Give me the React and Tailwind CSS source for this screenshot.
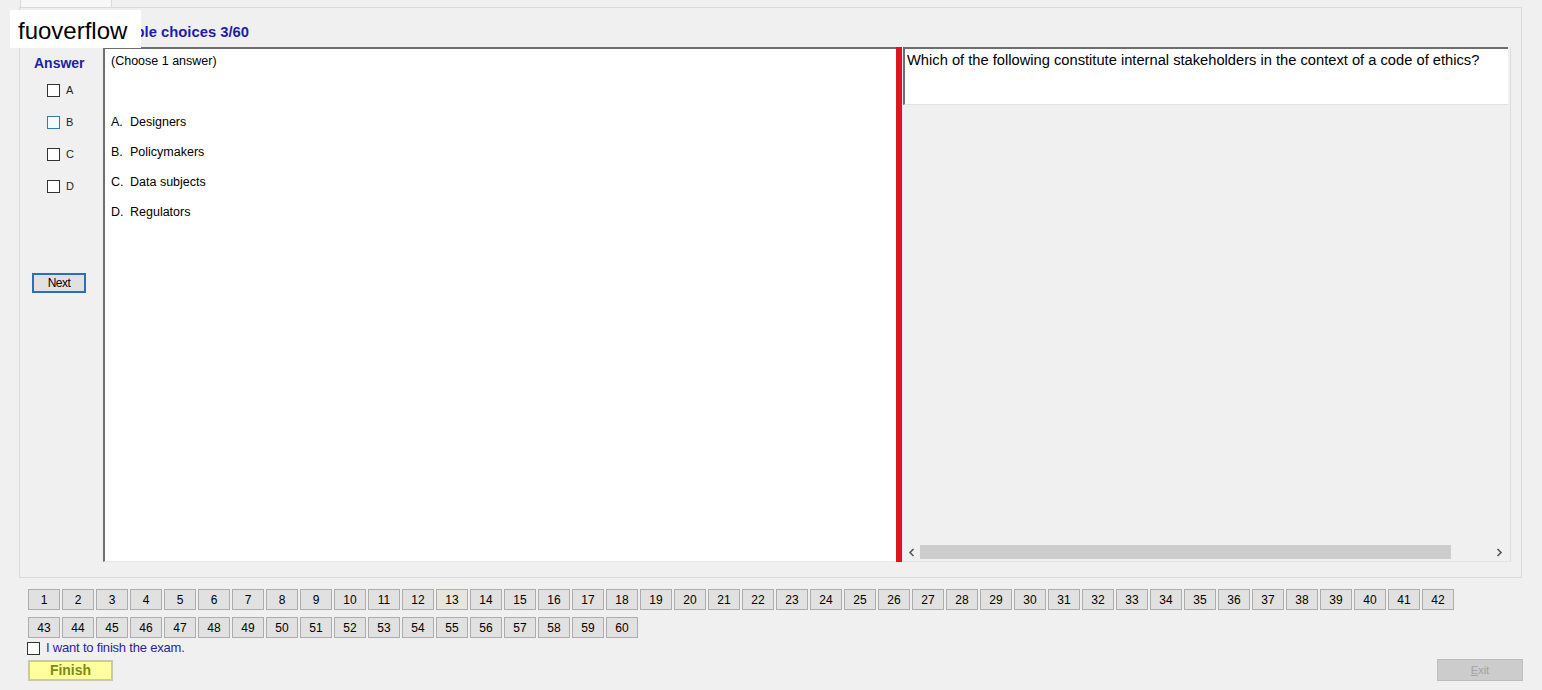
// App.jsx — exam question screen

const OPTIONS = [
  { key: 'A', text: 'Designers' },
  { key: 'B', text: 'Policymakers' },
  { key: 'C', text: 'Data subjects' },
  { key: 'D', text: 'Regulators' },
]

const ROW_ONE = Array.from({ length: 42 }, (_, i) => i + 1)
const ROW_TWO = Array.from({ length: 18 }, (_, i) => i + 43)

function Box({ hover = false }) {
  return (
    <div
      className={`w-[13px] h-[13px] border ${
        hover ? 'border-[#3a7aa8] bg-[#f3fafd]' : 'border-[#333333] bg-white'
      }`}
    />
  )
}

function NumButton({ n }) {
  return (
    <div
      className={`w-[32px] h-[21px] flex items-center justify-center text-[12px] text-black border border-[#adadad] ${
        n === 13 ? 'bg-[#e6e6dc]' : 'bg-[#e1e1e1]'
      }`}
    >
      {n}
    </div>
  )
}

export default function App() {
  return (
    <div
      className="relative w-[1542px] h-[690px] overflow-hidden bg-[#f0f0f0] text-black"
      style={{ fontFamily: '"Liberation Sans", Arial, sans-serif' }}
    >
      {/* tab strip */}
      <div className="h-[7px] flex">
        <div className="ml-[20px] w-[92px] h-[7px] bg-[#f7f7f7] border-l border-r border-[#d9d9d9]" />
        <div className="flex-1" />
      </div>

      {/* tab page */}
      <div className="ml-[19px] w-[1503px] border border-[#dadada] bg-[#f0f0f0]">
        <div className="pt-[16px] h-[32px]">
          <div className="pl-[81px] h-[16px] leading-[16px] text-[14.8px] font-bold text-[#1e1ea8]">
            Multiple choices 3/60
          </div>
        </div>

        <div className="mt-[7px] h-[515px] flex">
          {/* answer column */}
          <div className="w-[83px] flex flex-col">
            <div className="pt-[8px] pl-[14px] h-[27px] leading-[16px] text-[14px] font-bold text-[#2222a3]">
              Answer
            </div>
            <div className="flex flex-col">
              {OPTIONS.map((o, i) => (
                <div key={o.key} className="h-[32px] flex items-center pl-[27px] gap-[6px]">
                  <Box hover={i === 1} />
                  <span className="text-[11px] text-[#222]">{o.key}</span>
                </div>
              ))}
            </div>
            <div className="mt-[71px] ml-[12px] w-[54px] h-[20px] border-2 border-[#2a6fb8] bg-[#e1e1e1] flex items-center justify-center text-[12px] tracking-[-0.5px]">
              Next
            </div>
          </div>

          {/* options box */}
          <div className="w-[793px] bg-white border-l-2 border-t-2 border-[#6e6e6e] border-b border-b-[#e6e6e6] pl-[6px] pt-[4px] text-[12.5px]">
            <div className="h-[16px] leading-[16px]">(Choose 1 answer)</div>
            <div className="mt-[45px] flex flex-col gap-[14px]">
              {OPTIONS.map((o) => (
                <div key={o.key} className="h-[16px] leading-[16px] flex">
                  <span className="w-[19px]">{o.key}.</span>
                  <span>{o.text}</span>
                </div>
              ))}
            </div>
          </div>

          {/* splitter */}
          <div className="w-[6px] bg-[#dc1426]" />

          {/* question panel */}
          <div className="w-[609px] pl-[1px] border-r border-[#dcdcdc] flex flex-col border-b border-b-[#e4e4e4]">
            <div className="w-[605px] h-[58px] bg-white border-t-2 border-l-2 border-[#6e6e6e] border-b border-b-[#e2e2e2] pt-[3px] pl-[2px] text-[14.7px] leading-[17px]">
              Which of the following constitute internal stakeholders in the context of a code of ethics?
            </div>
            <div className="flex-1" />
            <div className="w-[605px] h-[14px] flex items-center">
              <div className="w-[17px] flex justify-center">
                <svg width="7" height="9" viewBox="0 0 7 9">
                  <path d="M5.5 1 L2 4.5 L5.5 8" stroke="#555" strokeWidth="1.6" fill="none" />
                </svg>
              </div>
              <div className="w-[531px] h-[14px] bg-[#cdcdcd]" />
              <div className="flex-1" />
              <div className="w-[17px] flex justify-center">
                <svg width="7" height="9" viewBox="0 0 7 9">
                  <path d="M1.5 1 L5 4.5 L1.5 8" stroke="#555" strokeWidth="1.6" fill="none" />
                </svg>
              </div>
            </div>
            <div className="h-[2px]" />
          </div>
        </div>

        <div className="h-[15px]" />
      </div>

      {/* question navigation */}
      <div className="mt-[11px] pl-[28px] flex flex-col gap-[7px]">
        <div className="flex gap-[2px]">
          {ROW_ONE.map((n) => (
            <NumButton key={n} n={n} />
          ))}
        </div>
        <div className="flex gap-[2px]">
          {ROW_TWO.map((n) => (
            <NumButton key={n} n={n} />
          ))}
        </div>
      </div>

      <div className="mt-[3px] pl-[27px] flex items-center h-[14px] gap-[6px]">
        <div className="w-[13px] h-[13px] border border-[#333333] bg-white" />
        <span className="text-[13px] text-[#2b23a0] tracking-[-0.2px]">I want to finish the exam.</span>
      </div>

      <div className="mt-[5px] pl-[28px] pr-[19px] flex items-start justify-between">
        <div className="w-[85px] h-[21px] bg-[#ffff9e] border-2 border-[#c9c9a8] flex items-center justify-center text-[14px] font-bold text-[#7d8c14]">
          Finish
        </div>
        <div className="-mt-[1px] w-[86px] h-[22px] bg-[#cccccc] border border-[#bdbdbd] flex items-center justify-center text-[11px] text-[#a3a3a3]">
          <span>
            <span className="underline">E</span>xit
          </span>
        </div>
      </div>

      {/* watermark */}
      <div className="absolute left-[10px] top-[10px] w-[131px] h-[38px] bg-white pl-[8px] pt-[4px] flex items-center text-[24px] text-black">
        fuoverflow
      </div>
    </div>
  )
}
